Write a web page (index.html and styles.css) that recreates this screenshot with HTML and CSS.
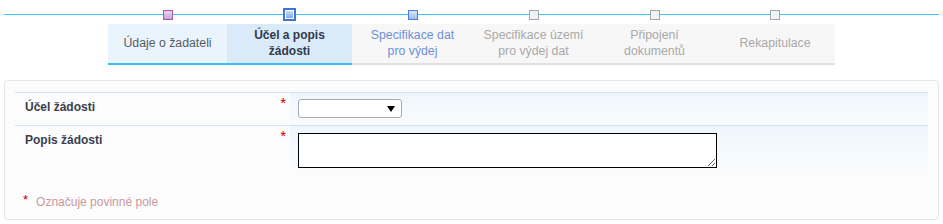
FILE: index.html
```html
<!DOCTYPE html>
<html lang="cs">
<head>
<meta charset="utf-8">
<title>Účel a popis žádosti</title>
<link rel="stylesheet" href="styles.css">
</head>
<body>
<div class="wizard">
  <div class="steps">
    <div class="cols">
      <span class="marker m-done"></span>
      <span class="marker m-active"></span>
      <span class="marker m-next"></span>
      <span class="marker m-off"></span>
      <span class="marker m-off"></span>
      <span class="marker m-off"></span>
    </div>
  </div>
  <div class="tabs cols">
    <div class="tab t-done">Údaje o žadateli</div>
    <div class="tab t-active">Účel a popis<br>žádosti</div>
    <div class="tab t-next">Specifikace dat<br>pro výdej</div>
    <div class="tab t-off">Specifikace území<br>pro výdej dat</div>
    <div class="tab t-off">Připojení<br>dokumentů</div>
    <div class="tab t-off">Rekapitulace</div>
  </div>
</div>

<div class="panel">
  <div class="row">
    <div class="label"><span>Účel žádosti</span><span class="req">*</span></div>
    <div class="value v-select">
      <span class="select-wrap"><select class="select"><option></option></select></span>
    </div>
  </div>
  <div class="row">
    <div class="label"><span>Popis žádosti</span><span class="req">*</span></div>
    <div class="value v-text">
      <textarea class="textarea"></textarea>
    </div>
  </div>
  <div class="note"><span class="req-small">*</span>Označuje povinné pole</div>
</div>
</body>
</html>
```

FILE: styles.css
```css
html, body {
  margin: 0;
  padding: 0;
  background: #ffffff;
}

body {
  font-family: "Liberation Sans", Arial, sans-serif;
  font-size: 12px;
  color: #333;
}

.wizard {
  margin: 0 4px;
}

.cols {
  display: grid;
  grid-template-columns: 119px 125px 121px 121px 121px 120px;
  margin-left: 104px;
}

.steps {
  height: 24px;
  background: linear-gradient(#3ec0f2, #3ec0f2) no-repeat 0 14px / 100% 1px;
}

.steps .cols {
  height: 24px;
  justify-items: center;
  align-items: start;
}

.marker {
  display: block;
  box-sizing: border-box;
  width: 10px;
  height: 10px;
  margin-top: 10px;
  border: 1px solid #a3a9b3;
}

.m-done {
  border-color: #9c5aab;
  background: linear-gradient(#ead5ef, #c9a2d5);
}

.m-active {
  width: 13px;
  height: 13px;
  margin-top: 8px;
  border: 2px solid #3f74da;
  padding: 1px;
  background: linear-gradient(#c9dcf6, #86abe5) content-box, #ffffff;
}

.m-next {
  border-color: #4a7fe0;
  background: linear-gradient(#d8e6f9, #9dbdec);
}

.m-off {
  border-color: #a3a9b3;
  background: #f1f3f6;
}

.tabs {
  height: 41px;
}

.tab {
  display: flex;
  align-items: center;
  justify-content: center;
  text-align: center;
  box-sizing: border-box;
  height: 41px;
  padding-bottom: 2px;
  line-height: 16px;
  font-size: 12.3px;
  background: #f7f7f7;
  border-bottom: 2px solid #e1e1e1;
  color: #a9a9a9;
}

.t-done {
  background: #eaf4fd;
  border-bottom-color: #3cbcf0;
  color: #575c63;
}

.t-active {
  background: #dbeaf8;
  border-bottom-color: #3cbcf0;
  color: #2f3a4d;
  font-weight: bold;
  font-size: 12px;
}

.t-next {
  color: #6f90d6;
}

.panel {
  margin: 15px 4px 0;
  border: 1px solid #e6e6e6;
  border-radius: 4px;
  background: #fcfcfc;
  padding: 11px 10px 10px;
}

.row {
  display: grid;
  grid-template-columns: 275px 1fr;
  border-top: 1px solid #d6e4f2;
}

.label {
  display: flex;
  align-items: flex-start;
  padding: 7px 4px 0 10px;
  font-weight: bold;
  color: #3a3f4c;
  line-height: 14px;
}

.req {
  margin-left: auto;
  color: #c40000;
  font-size: 15px;
  font-weight: normal;
  line-height: 10px;
  margin-top: -2px;
}

.value {
  background: linear-gradient(#eef6fd, #f9fcfe);
  padding: 6px 8px 7px;
}

.v-text {
  padding: 7px 8px 1px;
}

.select-wrap {
  position: relative;
  display: inline-block;
  vertical-align: top;
}

.select-wrap::after {
  content: "";
  position: absolute;
  right: 7px;
  top: 7px;
  border-left: 4px solid transparent;
  border-right: 4px solid transparent;
  border-top: 6px solid #000;
  pointer-events: none;
}

.select {
  display: block;
  -webkit-appearance: none;
  appearance: none;
  box-sizing: border-box;
  width: 104px;
  height: 19px;
  margin: 0;
  border: 1px solid #a9a9a9;
  border-radius: 3px;
  background: #ffffff;
  font-family: inherit;
  font-size: 12px;
}

.textarea {
  display: block;
  box-sizing: border-box;
  width: 419px;
  height: 35px;
  margin: 0;
  border: 1px solid #000000;
  background: #ffffff;
  font-family: inherit;
  font-size: 12px;
}

.note {
  margin-top: 26px;
  padding-left: 8px;
  color: #c99a9f;
  line-height: 14px;
}

.req-small {
  color: #c40000;
  font-size: 13px;
  display: inline-block;
  vertical-align: top;
  line-height: 9px;
  margin-right: 8px;
}
```
